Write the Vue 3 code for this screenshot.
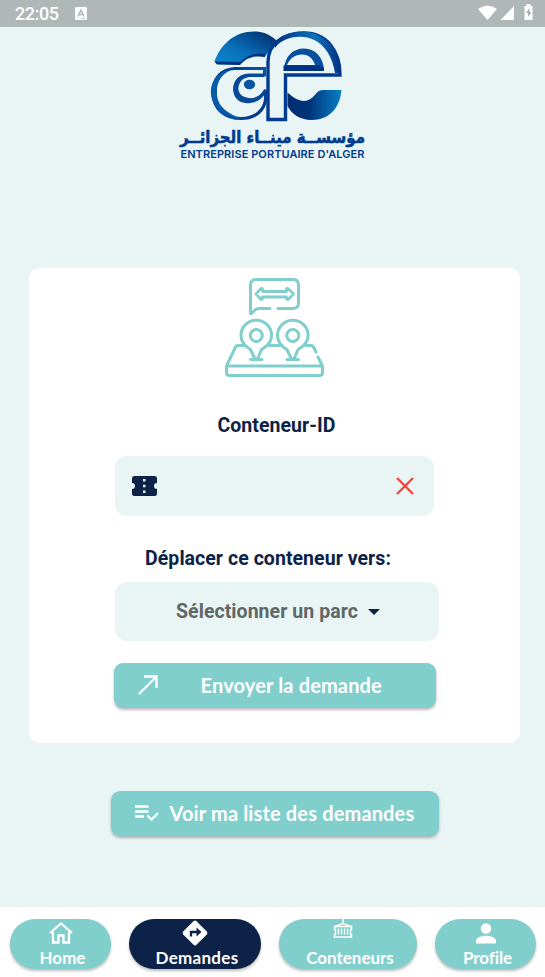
<script setup>
const tabs = [
  { id: 'home', label: 'Home' },
  { id: 'requests', label: 'Demandes', active: true },
  { id: 'containers', label: 'Conteneurs' },
  { id: 'profile', label: 'Profile' },
]
</script>

<template>
  <div class="screen">
    <header class="status">
      <span class="clock">22:05</span>
      <svg class="letter" width="12" height="13" viewBox="0 0 12 13">
        <rect width="12" height="13" rx="1.5" fill="#fff" />
        <path d="M3 9.500 6 3l3 6.500M4 7.500h4" fill="none" stroke="#afb7b7" stroke-width="1.500" />
        <path d="M6 11.500h4" stroke="#afb7b7" stroke-dasharray="1 .6" />
      </svg>
      <svg class="signals" width="56" height="18" viewBox="478 4 56 18">
        <path d="M478 9Q487.500 2 497 9L487.500 20Z" fill="#fff" />
        <path d="M514 6V20H500.500Z" fill="#fff" />
        <path d="M524.500 6h2V4h4v2h2v14h-8Z" fill="#fff" />
        <path d="M529.500 8l-3.500 5h2v4l3.500-5h-2Z" fill="#a5adad" />
      </svg>
    </header>

    <main class="content">
      <div class="brand">
        <svg class="logo" width="189" height="98" viewBox="178 28 189 98">
          <defs>
            <linearGradient id="sail" x1="0" y1="1" x2="1" y2="0">
              <stop offset="0" stop-color="#0a86cf" /><stop offset=".4" stop-color="#0872bb" /><stop offset="1" stop-color="#002765" />
            </linearGradient>
            <linearGradient id="edge" x1="0" y1="0" x2="1" y2="1">
              <stop offset="0" stop-color="#003184" /><stop offset=".5" stop-color="#0756a5" /><stop offset="1" stop-color="#00337f" />
            </linearGradient>
            <linearGradient id="hull">
              <stop offset="0" stop-color="#002c72" /><stop offset=".4" stop-color="#003478" /><stop offset="1" stop-color="#0880c8" />
            </linearGradient>
            <linearGradient id="arch">
              <stop offset="0" stop-color="#003184" /><stop offset=".6" stop-color="#0f70b8" /><stop offset="1" stop-color="#003184" />
            </linearGradient>
          </defs>
          <path d="M214.500 61.500C222 41 239 29 260 32C267 33 273 37 277 41L265 56.500C254 54 246 57 240 64.500L217 64Z" fill="url(#sail)" />
          <path d="M214.500 61.500 240 62C247 55 256 52 265 54V57C254 55 246 58 240 65L217 64.500Z" fill="#00327f" />
          <path d="M264.500 68.500H235C220 69 213 80 213 93C213 109 225 118.500 241 118.500C256 118.500 264 110 265.500 100V90C262 97 257 100 249 100C239 100 235 96 235 89C235 80 241 75 250 75H264.500Z" fill="#e9f5f5" stroke="url(#edge)" stroke-width="3.200" />
          <path d="M234 69C209 71 206 96 217 107C223 114 232 118 242 119C230 114 217 108 217 93C216 80 224 72 234 69Z" fill="#075ba9" />
          <path d="M264 74H250C237 74 231 84 234 94C236 101 243 104 250 103C261 102 265 95 265 89C261 96 256 99 249 98C240 97 237 91 239 85C241 79 246 77 251 77H264Z" fill="#064a96" />
          <ellipse cx="249.500" cy="84.500" rx="5.600" ry="4.800" fill="#0756a5" />
          <path d="M268 119.500V62C268 44 283 33 304 33C327 33 340 51 340 75H285.500V119.500Z" fill="#e9f5f5" stroke="#003a91" stroke-width="3.400" />
          <path d="M275 44C287 29 313 26 329 43C337 52 341 62 341 73H335C332 53 320 38 303 37C291 36 281 40 275 48Z" fill="url(#arch)" />
          <path d="M284 69C285 56 293 48.500 304 48.500C316 48.500 323 58 324 69Z" fill="#064f9f" />
          <path d="M287 65C290 58 295 54.500 302 54.500C309 54.500 313 59 315 65Z" fill="#e9f5f5" />
          <path d="M283.500 65.500H319L324 68V71H283.500Z" fill="#003184" />
          <path d="M287.500 92.500C297 101 305 104 313 97C317 93 318 90 323 90H341.500C340 108 329 120 312 120C299 120 291 113 287.500 106Z" fill="url(#hull)" />
        </svg>
        <div class="arabic" dir="rtl">مؤسســة مينــاء الجزائــر</div>
        <div class="company">ENTREPRISE PORTUAIRE D'ALGER</div>
      </div>

      <section class="card">
        <svg class="map" width="100" height="100" viewBox="225 278 100 100" fill="none" stroke="#81cfcc" stroke-width="3" stroke-linecap="round" stroke-linejoin="round">
          <path d="M270 308.500H259Q257 308.500 255 310L251.500 313.500Q250.500 314 250.500 312V285Q250.500 279.500 256 279.500H293Q298.500 279.500 298.500 285V303Q298.500 308.500 293 308.500H278" />
          <path d="M256 294 261 288.500Q263 288 262.500 291.500H286.500Q286 288 288 288.500L293.500 294 288 299.500Q286 300 286.500 297H262.500Q263 300 261 299.500Z" stroke-width="2.800" />
          <path d="M250.500 349.500Q241 344 241 335.500A15.300 15.300 0 0 1 271.600 335.500Q271.600 344 261.500 349.500L257.500 359H255Z" />
          <path d="M287 349.500Q277.500 344 277.500 335.500A15.300 15.300 0 0 1 308.100 335.500Q308.100 344 298 349.500L294 359H291.500Z" />
          <circle cx="256.300" cy="335.500" r="6" /><circle cx="292.800" cy="335.500" r="6" />
          <path d="M250.500 359.500H262M287 359.500H298.500M269 345.500H280M245 345.500H238Q236 345.500 235 348L226.500 366M306 345.500H311Q313 345.500 314 348L316 352M318 357 322.500 366" />
          <path d="M229 366H320Q322.500 366 322.500 368.500V372.500Q322.500 375.500 319.500 375.500H229.500Q226.500 375.500 226.500 372.500V368.500Q226.500 366 229 366Z" />
        </svg>
        <h2 class="label label-id">Conteneur-ID</h2>
        <div class="field">
          <svg width="26" height="20" viewBox="0 0 26 20">
            <path fill="#0c2347" fill-rule="evenodd" d="M2.500 0h20A2.500 2.500 0 0 1 25 2.500V7a3 3 0 0 0 0 6v4.500a2.500 2.500 0 0 1-2.500 2.500h-20A2.500 2.500 0 0 1 0 17.500V13a3 3 0 0 0 0-6V2.500A2.500 2.500 0 0 1 2.500 0ZM11 3v2.500h2.500V3ZM11 8.700v2.600h2.500V8.700ZM11 14.500V17h2.500v-2.500Z" />
          </svg>
          <svg width="18" height="18" viewBox="0 0 18 18"><path d="m1 1 16 16M17 1 1 17" stroke="#f44336" stroke-width="2.300" /></svg>
        </div>
        <h2 class="label label-target">Déplacer ce conteneur vers:</h2>
        <div class="select">
          <span>Sélectionner un parc</span>
          <svg width="12" height="6" viewBox="0 0 12 6"><path d="M0 0h12L6 6Z" fill="#0c2347" /></svg>
        </div>
        <button class="action send">
          <svg width="20" height="20" viewBox="0 0 20 20" fill="none" stroke="#fff" stroke-width="2.300"><path d="M1 19 18 2M6 1.500H18.500V13" /></svg>
          <span>Envoyer la demande</span>
        </button>
      </section>

      <button class="action list">
        <svg width="24" height="17" viewBox="0 0 24 17" fill="none" stroke="#fff" stroke-width="2.300"><path d="M0 1.500H13.500M0 6.500H13.500M0 11.500H9M12.500 10.500l4 4L23 8" /></svg>
        <span>Voir ma liste des demandes</span>
      </button>
    </main>

    <nav class="tabs">
      <button v-for="tab in tabs" :key="tab.id" class="tab" :class="[tab.id, { active: tab.active }]">
        <svg v-if="tab.id === 'home'" width="26" height="26" viewBox="0 0 26 26"><path d="M5 12V22.500H10.500V15.500H15.500V22.500H21V12M2 13 13 3.500 24 13" fill="none" stroke="#fff" stroke-width="2.300" /></svg>
        <svg v-else-if="tab.id === 'requests'" width="26" height="26" viewBox="0 0 26 26"><path d="M11.500 1.200Q13 0 14.500 1.200L24.800 11.500Q26 13 24.800 14.500L14.500 24.800Q13 26 11.500 24.800L1.200 14.500Q0 13 1.200 11.500Z" fill="#fff" /><path d="M9 16.500V12h7" stroke="#0c2347" stroke-width="2.300" fill="none" /><path d="M14.500 7.500 19.500 12l-5 4.500Z" fill="#0c2347" /></svg>
        <svg v-else-if="tab.id === 'containers'" width="26" height="26" viewBox="0 0 26 26" fill="none" stroke="#fff"><path d="M13 0V4.500M4 8 13 4.500 22 8" stroke-width="1.600" /><path d="M4.500 7.500h17v3h-1v5h1v2.500h-17v-2.500h1v-5h-1Z" stroke-width="1.500" /><path d="M8.500 9.500v6M11.500 9.500v6M14.500 9.500v6M17.500 9.500v6" stroke-width="1.400" /></svg>
        <svg v-else width="26" height="26" viewBox="0 0 26 26" fill="#fff"><circle cx="13" cy="8.500" r="5.200" /><path d="M3 23.500v-2.500c0-3.500 6-5.300 10-5.300s10 1.800 10 5.300v2.500Z" /></svg>
        <span>{{ tab.label }}</span>
      </button>
    </nav>
  </div>
</template>

<style>
body { margin: 0; background: #e9f5f5; }
</style>

<style scoped>
* { box-sizing: border-box; }
.screen { width: 545px; height: 977px; display: flex; flex-direction: column; background: #e9f5f5; font-family: Roboto, sans-serif; overflow: hidden; }
.status { height: 27px; flex: none; display: flex; align-items: center; padding: 0 11px 0 15px; background: #afb7b7; color: #fff; }
.clock { font-size: 18px; line-height: 27px; width: 60px; letter-spacing: -.4px; font-weight: 500; }
.signals { margin-left: auto; margin-top: -1px; }
.content { flex: 1; display: flex; flex-direction: column; align-items: center; }
.brand { height: 132px; margin-top: 1px; flex: none; display: flex; flex-direction: column; align-items: center; color: #003b8d; white-space: nowrap; }
.logo { display: block; flex: none; }
.arabic { font: bold 15px/22px "DejaVu Sans", sans-serif; -webkit-text-stroke: .5px #003b8d; transform: scaleY(1.12); }
.company { font: 600 11px/12px Inter, sans-serif; letter-spacing: .07px; }
.card { width: 491px; height: 475px; margin: 108px 0 0 4px; flex: none; background: #fff; border-radius: 11px; display: flex; flex-direction: column; align-items: center; padding-top: 10px; }
.map { flex: none; }
.label { margin: 0; color: #0c2347; font-size: 19.500px; line-height: 24px; font-weight: 700; letter-spacing: .05px; white-space: nowrap; }
.label-id { margin: 36px 0 0 4px; }
.field { margin: 18px 0 0; width: 319px; height: 60px; background: #e9f5f5; border-radius: 12px; padding: 0 20px 0 17px; display: flex; align-items: center; justify-content: space-between; }
.label-target { margin: 31px 13px 0 0; }
.select { margin: 11px 0 0 5px; width: 324px; height: 59px; border-radius: 12px; background: #e9f5f5; display: flex; align-items: center; gap: 10px; padding-left: 61px; color: #616766; font-size: 19.500px; font-weight: 700; letter-spacing: .06px; white-space: nowrap; }
.action { border: 0; border-radius: 9px; height: 45px; padding: 0 0 2px 24px; background: #81cfcc; color: #fff; font: bold 20px Lato, sans-serif; letter-spacing: .15px; display: flex; align-items: center; box-shadow: 0 2px 3px #0004; white-space: nowrap; flex: none; }
.send { width: 322px; margin: 22px 0 0; gap: 43px; }
.list { width: 328px; margin: 48px 0 0 4px; gap: 11px; }
.list svg { margin-top: 2px; }
.tabs { height: 70px; flex: none; background: #fff; display: flex; gap: 18px; padding: 12px 9px 0 10px; }
.tab { height: 50px; border: 0; border-radius: 25px; padding: 1px 0 0; background: #81cfcc; color: #fff; display: flex; flex-direction: column; align-items: center; box-shadow: 0 2px 3px #0004; font: bold 17px/24px Lato, sans-serif; }
.tab svg { display: block; flex: none; }
.tab span { display: block; margin-left: 4px; }
.home { width: 101px; }
.requests { width: 132px; letter-spacing: .3px; }
.containers { width: 138px; }
.containers svg { margin: -1px 10px 1px 0; }
.profile { width: 101px; }
.profile span { letter-spacing: -.1px; }
.active { background: #0c2347; }
</style>
